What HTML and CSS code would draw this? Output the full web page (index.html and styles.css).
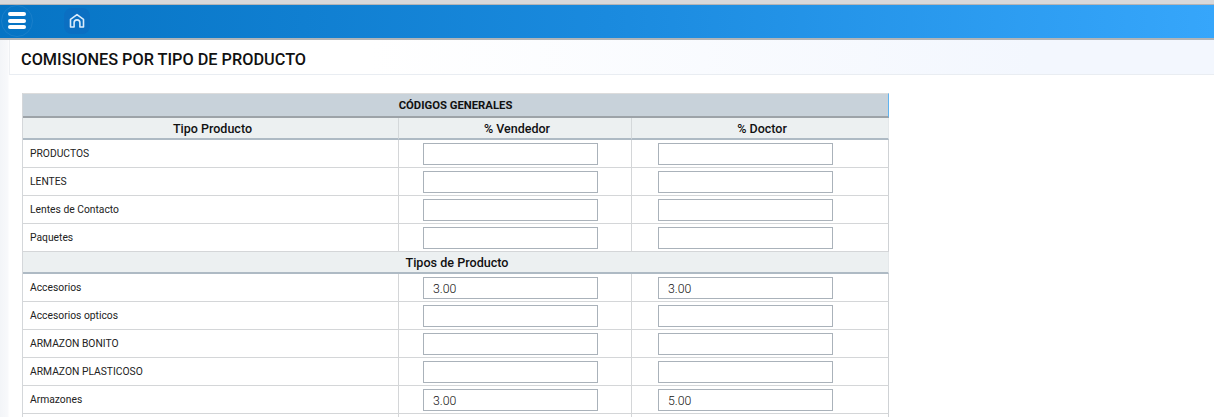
FILE: index.html
```html
<!DOCTYPE html>
<html lang="es">
<head>
<meta charset="utf-8">
<title>Comisiones por tipo de producto</title>
<link rel="stylesheet" href="styles.css">
</head>
<body>
<div class="topstrip"></div>
<header class="appbar">
  <button class="menu-btn" aria-label="Menú">
    <span></span><span></span><span></span>
  </button>
  <button class="home-btn" aria-label="Inicio">
    <svg width="16" height="16" viewBox="0 0 16 16" fill="none" stroke="#dcecfb" stroke-width="1.6" stroke-linejoin="round" stroke-linecap="round">
      <path d="M1.5 14V6.4L8 1.6l6.5 4.8V14h-3.6V9.8a2.9 2.9 0 0 0-5.8 0V14z"/>
    </svg>
  </button>
</header>
<div class="content">
  <div class="titlebar"><h1>COMISIONES POR TIPO DE PRODUCTO</h1></div>
  <main class="panel">
    <table class="grid">
      <colgroup><col class="c1"><col class="c2"><col class="c3"></colgroup>
      <thead>
        <tr class="caption"><th colspan="3">CÓDIGOS GENERALES</th></tr>
        <tr class="heads"><th>Tipo Producto</th><th>% Vendedor</th><th>% Doctor</th></tr>
      </thead>
      <tbody>
        <tr><td>PRODUCTOS</td><td><input class="field a"></td><td><input class="field b"></td></tr>
        <tr><td>LENTES</td><td><input class="field a"></td><td><input class="field b"></td></tr>
        <tr><td>Lentes de Contacto</td><td><input class="field a"></td><td><input class="field b"></td></tr>
        <tr><td>Paquetes</td><td><input class="field a"></td><td><input class="field b"></td></tr>
        <tr class="section"><th colspan="3">Tipos de Producto</th></tr>
        <tr><td>Accesorios</td><td><input class="field a" value="3.00"></td><td><input class="field b" value="3.00"></td></tr>
        <tr><td>Accesorios opticos</td><td><input class="field a"></td><td><input class="field b"></td></tr>
        <tr><td>ARMAZON BONITO</td><td><input class="field a"></td><td><input class="field b"></td></tr>
        <tr><td>ARMAZON PLASTICOSO</td><td><input class="field a"></td><td><input class="field b"></td></tr>
        <tr><td>Armazones</td><td><input class="field a" value="3.00"></td><td><input class="field b" value="5.00"></td></tr>
        <tr><td>&nbsp;</td><td><input class="field a"></td><td><input class="field b"></td></tr>
      </tbody>
    </table>
  </main>
</div>
</body>
</html>
```
FILE: styles.css
```css
html, body {
  margin: 0;
  height: 417px;
  overflow: hidden;
  background: #fff;
  font-family: Roboto, "Liberation Sans", sans-serif;
  color: #111;
}
.topstrip {
  height: 4px;
  background: #d8d8da;
  border-bottom: 1px solid #b4b4b6;
}
.appbar {
  height: 33px;
  display: flex;
  align-items: center;
  background: linear-gradient(90deg, #0674c4 0%, #1a8ade 50%, #36a6fb 100%);
  border-bottom: 2px solid #b0b4b8;
}
.menu-btn {
  box-sizing: border-box;
  width: 32px;
  height: 32px;
  margin: -2px 0 0 1px;
  padding: 0 6px;
  background: transparent;
  border: 1px solid #1a7fca;
  border-radius: 50%;
  display: flex;
  flex-direction: column;
  justify-content: center;
  gap: 2.5px;
}
.menu-btn span {
  display: block;
  height: 4px;
  background: #fff;
  border-radius: 2px;
}
.home-btn {
  box-sizing: border-box;
  width: 26px;
  height: 26px;
  margin: -1px 0 0 31px;
  padding: 0;
  background: #0b6fc2;
  border: 0;
  border-radius: 8px;
  display: flex;
  align-items: center;
  justify-content: center;
}
.content {
  padding-left: 9px;
  background: linear-gradient(90deg, #f3f5f8 0, #f8f9fb 8px, #fff 9px);
  height: 378px;
  overflow: hidden;
}
.titlebar {
  height: 35px;
  display: flex;
  align-items: center;
  padding: 4px 0 0 11px;
  background: linear-gradient(90deg, #fff 0%, #fff 30%, #f3f7fe 85%);
  border-left: 1px solid #eef0f3;
  border-bottom: 1px solid #e9edf2;
  box-sizing: border-box;
}
.titlebar h1 {
  margin: 0;
  font-size: 16.3px;
  font-weight: 500;
  color: #111;
}
.panel {
  padding: 18px 0 0 13px;
}
.grid {
  width: 867px;
  table-layout: fixed;
  border-collapse: separate;
  border-spacing: 0;
  border-left: 1px solid #d4d7da;
  background: #fff;
}
.c1 { width: 375px; }
.c2 { width: 233px; }
.c3 { width: 258px; }
.caption th {
  height: 22px;
  padding: 0;
  background: #c8d2da;
  border-top: 1px solid #dcdcdc;
  border-bottom: 2px solid #9da3a8;
  border-right: 1px solid #5fb3f0;
  font-size: 11.3px;
  font-weight: 700;
}
.heads th {
  height: 20px;
  padding: 0 0 0 4px;
  background: #ecf0f1;
  border-bottom: 2px solid #aebac4;
  font-size: 12.5px;
  font-weight: 500;
}
.heads th + th {
  border-left: 1px solid #d4d8da;
}
.heads th:last-child {
  border-right: 1px solid #e4e8ea;
}
td {
  height: 27px;
  padding: 0;
  border-bottom: 1px solid #d4d6d8;
  font-size: 10.3px;
  color: #222;
}
td:first-child {
  padding-left: 7px;
}
td + td {
  border-left: 1px solid #d4d6d8;
}
td:last-child {
  border-right: 1px solid #cfd2d5;
}
.section th {
  height: 20px;
  padding: 0 0 0 3px;
  background: #ecf0f1;
  border-bottom: 2px solid #aebac4;
  border-right: 1px solid #e4e8ea;
  font-size: 12.6px;
  font-weight: 500;
}
.field {
  display: block;
  box-sizing: border-box;
  width: 175px;
  height: 22px;
  padding: 3px 9px 0;
  background: #fff;
  border: 1px solid #aab2ba;
  font-family: Roboto, "Liberation Sans", sans-serif;
  font-size: 12.3px;
  font-weight: 300;
  color: #111;
  outline: 0;
}
.field.a { margin-left: 24px; }
.field.b { margin-left: 26px; }
```
